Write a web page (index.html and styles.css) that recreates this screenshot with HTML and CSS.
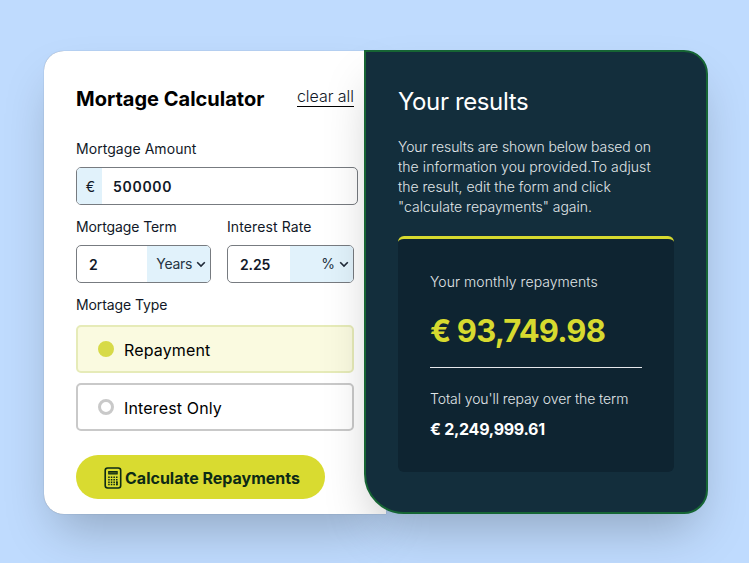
FILE: index.html
```html
<!DOCTYPE html>
<html lang="en">
<head>
<meta charset="utf-8">
<title>Mortage Calculator</title>
<link rel="stylesheet" href="styles.css">
</head>
<body>
<main class="card">
  <form class="calculator">
    <header class="heading">
      <h1>Mortage Calculator</h1>
      <a class="clear">clear all</a>
    </header>
    <div class="label amount-label">Mortgage Amount</div>
    <div class="field field-amount"><span class="euro">€</span><span class="value">500000</span></div>
    <div class="pair">
      <div class="term">
        <div class="label term-label">Mortgage Term</div>
        <div class="field"><span class="value">2</span><span class="unit"><span class="years">Years</span><svg width="10" height="7" viewBox="0 0 10 7"><path d="M1.2 1.3 5 5.1 8.8 1.3"/></svg></span></div>
      </div>
      <div class="rate">
        <div class="label rate-label">Interest Rate</div>
        <div class="field"><span class="value">2.25</span><span class="unit">%<svg width="10" height="7" viewBox="0 0 10 7"><path d="M1.2 1.3 5 5.1 8.8 1.3"/></svg></span></div>
      </div>
    </div>
    <div class="label type-label">Mortage Type</div>
    <div class="option option-on"><i class="dot"></i><span class="option-text">Repayment</span></div>
    <div class="option"><i class="dot"></i><span class="option-text">Interest Only</span></div>
    <button type="button" class="submit">
      <svg class="calc" width="18" height="22" viewBox="0 0 18 22">
        <rect x="1.2" y="1" width="15.5" height="20" rx="2.5" fill="none" stroke="#0d2a16" stroke-width="1.6"/>
        <rect x="4.7" y="4.5" width="8.5" height="2.5" fill="#3e5413" stroke="#0d2a16"/>
        <path d="M4.2 10.2h10M4.2 12.7h10M4.2 15.2h10M4.2 17.5h10" stroke="#0d2a16" stroke-width="1.4" stroke-dasharray="1.5 1.1"/>
        <path d="M13 14.5v3.7" stroke="#0d2a16" stroke-width="1.5"/>
      </svg><span>Calculate Repayments</span>
    </button>
  </form>
  <section class="results">
    <h2>Your results</h2>
    <p class="intro"><span class="tight">Your results are shown below based on</span><br><span class="loose">the information you provided.To adjust</span><br>the result, edit the form and click<br>"calculate repayments" again.</p>
    <div class="summary">
      <div class="caption monthly-label">Your monthly repayments</div>
      <div class="monthly">€ 93,749.98</div>
      <div class="caption total-label">Total you'll repay over the term</div>
      <div class="total">€ 2,249,999.61</div>
    </div>
  </section>
</main>
</body>
</html>
```
FILE: styles.css
```css
* { box-sizing: border-box; }
body {
  margin: 0;
  height: 563px;
  overflow: hidden;
  background: #bfdbfe;
  font-family: Inter, "Liberation Sans", sans-serif;
  color: #111827;
}
.card {
  display: flex;
  width: 664px;
  height: 464px;
  margin: 50px 0 0 44px;
}
.calculator {
  flex: none;
  width: 342px;
  height: 463px;
  margin-top: 1px;
  padding: 32px 32px 0;
  background: #fff;
  border-radius: 20px 0 0 20px;
  box-shadow: 0 25px 50px -12px rgba(0, 0, 0, .25), 0 0 1px rgba(0, 0, 0, .4);
}
.heading { display: flex; justify-content: space-between; width: 278px; height: 57px; }
h1 { margin: 0; font-size: 20px; font-weight: 700; line-height: 32px; color: #000; }
.clear { height: 21px; margin-top: 3px; border-bottom: 1px solid #000; font-size: 16px; font-weight: 300; line-height: 20px; letter-spacing: -.04px; }
.label { height: 19px; margin-bottom: 8px; font-size: 14px; line-height: 18px; }
.amount-label { letter-spacing: .06px; }
.term-label { letter-spacing: -.1px; }
.rate-label { letter-spacing: .1px; }
.type-label { margin-bottom: 10px; letter-spacing: -.1px; }
.field {
  display: flex;
  height: 38px;
  margin-bottom: 13px;
  overflow: hidden;
  border: 1px solid #777b80;
  border-radius: 5px;
  line-height: 38px;
  font-size: 14px;
}
.field-amount { width: 282px; }
.euro { width: 25px; padding-left: 2px; background: #e1f2fb; text-align: center; }
.value { flex: 1; padding-left: 12px; font-weight: 600; }
.field-amount .value { padding-left: 11px; letter-spacing: .7px; }
.rate .value { letter-spacing: -.1px; }
.pair { display: grid; grid-template-columns: 135px 127px; gap: 16px; }
.unit { display: flex; align-items: center; justify-content: flex-end; gap: 4px; width: 63px; padding-right: 4px; background: #e1f2fb; color: #263442; }
.years { letter-spacing: -.3px; }
.unit svg { fill: none; stroke: #1f2937; stroke-width: 1.6; }
.option {
  display: flex;
  align-items: center;
  gap: 10px;
  width: 278px;
  height: 48px;
  margin-bottom: 10px;
  padding: 2px 0 0 20px;
  border: 2px solid #c9c9c9;
  border-radius: 5px;
  font-size: 16px;
  color: #000;
}
.option-text { letter-spacing: .15px; }
.option-on { background: #fafae0; border-color: #e6ebb8; }
.dot { width: 16px; height: 16px; margin-top: -2px; border: 3px solid #c9c9c9; border-radius: 50%; }
.option-on .dot { background: #d7da48; border-color: #d7da48; }
.submit {
  display: flex;
  align-items: center;
  width: 249px;
  height: 44px;
  margin-top: 24px;
  padding: 1px 0 0 28px;
  border: 0;
  border-radius: 22px;
  background: #d9db30;
  color: #0d2a16;
  font: 700 16px/24px Inter, "Liberation Sans", sans-serif;
}
.calc { flex: none; margin-right: 3px; }
.results {
  position: relative;
  flex: none;
  width: 344px;
  height: 464px;
  margin-left: -22px;
  padding: 32px;
  border: 2px solid #166534;
  border-radius: 0 24px 24px 40px;
  background: #132e3c;
  box-shadow: 0 25px 50px -12px rgba(0, 0, 0, .25);
  color: #fff;
}
h2 { margin: 0 0 18px; padding-top: 1px; font-size: 24px; font-weight: 400; line-height: 34px; letter-spacing: -.38px; }
.intro { margin: 0 0 19px; font-size: 14px; font-weight: 300; line-height: 20px; color: #e0e6e8; white-space: nowrap; }
.tight { letter-spacing: -.09px; }
.loose { letter-spacing: .08px; }
.summary {
  width: 276px;
  height: 236px;
  padding: 33px 32px 0;
  border-top: 3px solid #d7da2f;
  border-radius: 6px;
  background: #0e2431;
}
.caption { font-size: 14px; font-weight: 300; line-height: 20px; color: #e0e6e8; }
.monthly-label { letter-spacing: .05px; }
.total-label { letter-spacing: -.09px; }
.monthly { height: 76px; margin-bottom: 21px; padding-top: 19px; border-bottom: 1px solid #e5e7eb; font-size: 31px; font-weight: 700; line-height: 40px; letter-spacing: -.85px; color: #d7da2f; white-space: nowrap; }
.total { margin-top: 8px; font-size: 16px; font-weight: 700; line-height: 24px; letter-spacing: -.28px; }
```
